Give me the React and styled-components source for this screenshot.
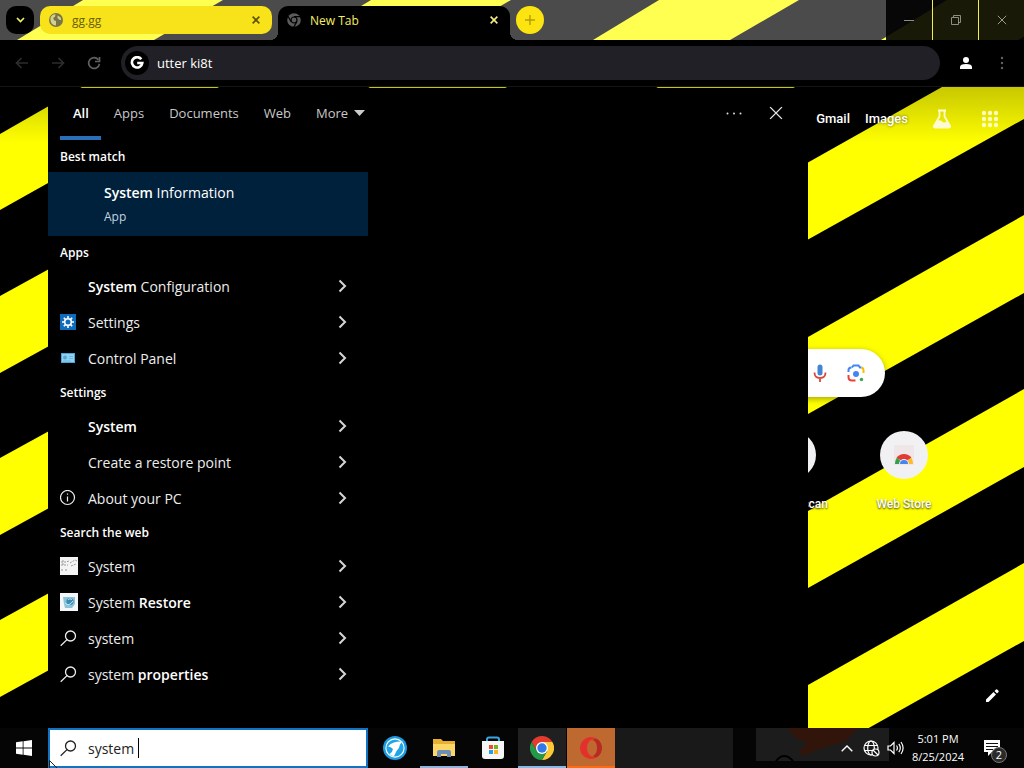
import React from 'react';
import styled, { createGlobalStyle, css } from 'styled-components';

const Global = createGlobalStyle`
  *, *::before, *::after { box-sizing: border-box; }
  body { margin: 0; background: #000; font-family: "Open Sans", "Noto Sans", sans-serif; color: #fff; }
  button, input { font: inherit; color: inherit; border: 0; background: none; padding: 0; margin: 0; }
  a { color: inherit; text-decoration: none; }
  h2, ul { margin: 0; padding: 0; list-style: none; }
  svg { display: block; flex: none; }
`;

const Desktop = styled.div`
  min-height: 100vh;
  display: grid;
  grid-template-rows: 40px 47px 1fr 40px;
  overflow: hidden;
`;

/* ---------- browser frame ---------- */

const TabStrip = styled.header`
  position: relative;
  display: flex;
  background: #4b4b4b;
`;

const FrameArt = styled.svg`
  position: absolute;
  inset: 0;
  width: 100%;
  height: 100%;
`;

const TabRow = styled.div`
  position: relative;
  flex: 1;
  display: flex;
  align-items: flex-start;
  gap: 6px;
  padding: 6px 0 0 6px;
`;

const TabMenu = styled.button`
  display: grid;
  place-items: center;
  width: 28px;
  height: 28px;
  border-radius: 10px;
  background: #000;
`;

const Tab = styled.div`
  position: relative;
  display: flex;
  align-items: center;
  gap: 9px;
  width: 232px;
  height: 28px;
  padding: 0 12px 0 9px;
  border-radius: 10px;
  background: #f8e21a;
  color: #6b5f08;
  font-size: 12px;
  ${(p) => p.$active && css`
    height: 34px;
    padding-bottom: 6px;
    border-radius: 10px 10px 0 0;
    background: #000;
    color: #f6ee62;
    &::before, &::after {
      content: "";
      position: absolute;
      bottom: 0;
      width: 8px;
      height: 8px;
    }
    &::before { left: -8px; background: radial-gradient(circle at 0 0, transparent 8px, #000 8px); }
    &::after { right: -8px; background: radial-gradient(circle at 100% 0, transparent 8px, #000 8px); }
  `}
`;

const TabTitle = styled.span`
  flex: 1;
`;

const NewTab = styled.button`
  display: grid;
  place-items: center;
  width: 28px;
  height: 28px;
  border-radius: 50%;
  background: #fbe40f;
`;

const Captions = styled.div`
  position: relative;
  display: flex;
  background: rgba(0, 0, 0, 0.9);
`;

const CaptionButton = styled.button`
  display: grid;
  place-items: center;
  width: 46px;
  & + & { border-left: 1px solid #f4ee4a; }
`;

const Toolbar = styled.div`
  display: flex;
  align-items: center;
  padding: 0 4px;
  background: #000;
  border-bottom: 1px solid #141414;
`;

const ToolButton = styled.button`
  display: grid;
  place-items: center;
  width: 36px;
  height: 32px;
`;

const Omnibox = styled.label`
  flex: 1;
  display: flex;
  align-items: center;
  gap: 8px;
  height: 34px;
  margin: 0 8px 0 9px;
  padding: 0 4px;
  border-radius: 17px;
  background: #202026;
`;

const GoogleBadge = styled.span`
  display: grid;
  place-items: center;
  width: 24px;
  height: 24px;
  border-radius: 50%;
  background: #000;
`;

const Address = styled.input`
  flex: 1;
  min-width: 0;
  font-size: 13px;
  outline: 0;
`;

const Menu = styled.div`
  display: flex;
`;

/* ---------- new tab page ---------- */

const NewTabPage = styled.main`
  position: relative;
  display: flex;
  flex-direction: column;
  min-height: 641px;
  background: #000;
`;

const Wallpaper = styled.svg`
  position: absolute;
  inset: 0;
  width: 100%;
  height: 100%;
`;

const Shade = styled.div`
  position: absolute;
  inset: 0 0 auto 0;
  height: 56px;
  background: linear-gradient(rgba(0, 0, 0, 0.22), transparent);
`;

const PageHeader = styled.nav`
  position: relative;
  display: flex;
  justify-content: flex-end;
  align-items: center;
  height: 63px;
  padding-right: 24px;
  font: 500 13px Roboto, "Liberation Sans", sans-serif;
  text-shadow: 0 0 3px rgba(0, 0, 0, 0.6);
`;

const HeaderLink = styled.a`
  margin-right: ${(p) => p.$space || 15}px;
`;

const SearchPill = styled.div`
  position: relative;
  display: flex;
  justify-content: flex-end;
  align-items: center;
  gap: 16px;
  width: 746px;
  height: 48px;
  margin: 199px auto 0;
  padding-right: 19px;
  border-radius: 24px;
  background: #fff;
  box-shadow: 0 2px 6px rgba(0, 0, 0, 0.35);
`;

const Shortcuts = styled.div`
  position: relative;
  display: flex;
  justify-content: flex-end;
  gap: 40px;
  width: 856px;
  margin: 34px auto 0;
`;

const Shortcut = styled.a`
  display: flex;
  flex-direction: column;
  align-items: ${(p) => (p.$end ? 'flex-end' : 'center')};
  gap: 17px;
  width: 72px;
  white-space: nowrap;
  font: 500 12px/16px Roboto, "Liberation Sans", sans-serif;
  text-shadow: 0 1px 2px rgba(0, 0, 0, 0.8);
`;

const ShortcutDisc = styled.span`
  display: grid;
  place-items: center;
  width: 48px;
  height: 48px;
  margin: 0 12px;
  border-radius: 50%;
  background: #f1f1f4;
`;

const Customize = styled.button`
  position: absolute;
  right: 24px;
  bottom: 24px;
`;

/* ---------- Windows search flyout ---------- */

const Flyout = styled.section`
  position: absolute;
  top: 1px;
  bottom: 0;
  left: 48px;
  width: 760px;
  background: #000;
`;

const FlyoutHeader = styled.div`
  display: flex;
  align-items: stretch;
  height: 52px;
  padding: 0 20px 0 12px;
`;

const Scope = styled.button`
  display: flex;
  align-items: center;
  gap: 6px;
  padding: 2px 12px 0 13px;
  font-size: 13px;
  color: #c9c9c9;
  border-bottom: 4px solid transparent;
  ${(p) => p.$active && css`
    color: #fff;
    font-weight: 600;
    border-color: #2a6fb8;
  `}
`;

const Spacer = styled.span`
  flex: 1;
`;

const FlyoutAction = styled.button`
  display: grid;
  place-items: center;
  width: 24px;
  height: 50px;
  margin-left: 18px;
`;

const Results = styled.div`
  width: 320px;
`;

const GroupTitle = styled.h2`
  height: 32px;
  padding: 2px 0 0 12px;
  font-size: 12px;
  font-weight: 600;
  line-height: 30px;
`;

const BestMatch = styled.button`
  display: flex;
  flex-direction: column;
  justify-content: center;
  gap: 4px;
  width: 100%;
  height: 64px;
  padding: 2px 0 0 56px;
  text-align: left;
  background: #00213c;
  font-size: 14px;
  line-height: 20px;
`;

const Kind = styled.span`
  font-size: 12px;
  color: #c3d3e0;
`;

const Row = styled.button`
  display: flex;
  align-items: center;
  gap: 12px;
  width: 100%;
  height: 36px;
  padding: 0 21px 0 12px;
  text-align: left;
  font-size: 14px;
  color: #ededed;
`;

const IconSlot = styled.span`
  width: 16px;
  height: 18px;
  display: flex;
  align-items: center;
`;

const RowText = styled.span`
  flex: 1;
`;

const Strong = styled.strong`
  font-weight: 600;
  color: #fff;
`;

/* ---------- taskbar ---------- */

const Taskbar = styled.footer`
  position: relative;
  display: flex;
  background: #050505;
`;

const Start = styled.button`
  display: grid;
  place-items: center;
  width: 48px;
`;

const SearchBox = styled.label`
  display: flex;
  align-items: center;
  gap: 11px;
  width: 320px;
  padding: 0 10px;
  border: 2px solid #1173c4;
  background: #fff;
  color: #222;
`;

const SearchField = styled.input`
  width: 50px;
  font-size: 14px;
  outline: 0;
`;

const Typed = styled.span`
  display: flex;
  align-items: center;
  &::after { content: ""; width: 1px; height: 20px; background: #000; }
`;

const Apps = styled.div`
  display: flex;
  gap: 1px;
  padding-left: 3px;
`;

const AppButton = styled.button`
  display: grid;
  place-items: center;
  width: 48px;
  background: ${(p) => p.$bg || 'transparent'};
  box-shadow: ${(p) => (p.$line ? `inset 0 -2px ${p.$line}` : 'none')};
`;

const Preview = styled.div`
  width: 118px;
  background: #191919;
`;

const TrayArt = styled.svg`
  position: absolute;
  right: 135px;
  top: 0;
`;

const Tray = styled.div`
  position: relative;
  display: flex;
  align-items: center;
  gap: 6px;
  margin-left: auto;
  padding-right: 14px;
`;

const TrayButton = styled.button`
  display: grid;
  place-items: center;
  width: 18px;
  height: 40px;
`;

const Clock = styled.time`
  width: 60px;
  margin-left: -2px;
  text-align: center;
  font-size: 11px;
  line-height: 18px;
`;

const Notices = styled.button`
  position: relative;
  display: grid;
  place-items: center;
  width: 36px;
  height: 40px;
`;

const Count = styled.span`
  position: absolute;
  right: 3px;
  bottom: 5px;
  width: 16px;
  height: 16px;
  border: 1px solid #777;
  border-radius: 50%;
  background: #2a2a2a;
  font-size: 11px;
  line-height: 14px;
`;

const Pointer = styled.svg`
  position: absolute;
  left: 49px;
  bottom: 0;
`;

/* ---------- drawings ---------- */

const Cross = ({ size = 8, color = '#fff', width = 2 }) => (
  <svg width={size} height={size} viewBox="0 0 10 10" stroke={color} strokeWidth={width} fill="none">
    <path d="M.8.8l8.4 8.4M9.2.8L.8 9.2" />
  </svg>
);

const Chevron = () => (
  <svg width="9" height="14" viewBox="0 0 9 14" fill="none" stroke="#d6d6d6" strokeWidth="2">
    <path d="M1.5 1.5L7 7l-5.500 5.500" />
  </svg>
);

const Loupe = ({ color = '#eee' }) => (
  <svg width="17" height="17" viewBox="0 0 17 17" fill="none" stroke={color} strokeWidth="1.3">
    <circle cx="10.500" cy="6" r="5" />
    <path d="M7 9.600L.7 15.700" />
  </svg>
);

const GlobeMark = () => (
  <svg width="14" height="14" viewBox="0 0 14 14">
    <circle cx="7" cy="7" r="7" fill="#77734a" />
    <path d="M1.5 5C2 2.7 4 1.4 6.5 1.2L6 3.8 4.2 5 5 7.3 7 8v4.5C3.5 12.5 1 9.5 1.5 5zM8.5 2.5l3 1.8.8 3-2-.6-1.8-1.8z" fill="#d6d08a" />
  </svg>
);

const ChromeMono = () => (
  <svg width="14" height="14" viewBox="0 0 14 14" fill="none">
    <circle cx="7" cy="7" r="6.8" fill="#5c5c5c" />
    <circle cx="7" cy="7" r="3" fill="#5c5c5c" stroke="#000" strokeWidth="1.2" />
    <path d="M7 3.7h6.2M4.1 8.6L1 3.3M9.9 8.6L6.8 14" stroke="#000" strokeWidth="1.2" />
  </svg>
);

const ChromeLogo = () => (
  <svg width="24" height="24" viewBox="0 0 24 24">
    <path d="M1.6 6A12 12 0 0 1 22.4 6L12 6.5l-5.2 8.5z" fill="#e33b2e" />
    <path d="M22.4 6A12 12 0 0 1 12 24l5.2-9L12 6z" fill="#fcc934" />
    <path d="M12 24A12 12 0 0 1 1.6 6l5.2 9h10.4z" fill="#249a49" />
    <circle cx="12" cy="12" r="6" fill="#fff" />
    <circle cx="12" cy="12" r="4.7" fill="#3378e8" />
  </svg>
);

const SettingsTile = () => (
  <svg width="16" height="16" viewBox="0 0 16 16">
    <path fill="#0f6cbd" d="M0 0h16v16H0z" />
    <g stroke="#fff" fill="none">
      <circle cx="8" cy="8" r="3.3" strokeWidth="1.6" />
      <path strokeWidth="1.6" d="M8 2v2.4M8 11.6V14M2 8h2.4M11.6 8H14M3.8 3.8l1.6 1.6M10.6 10.6l1.6 1.6M3.8 12.2l1.6-1.6M10.6 5.4l1.6-1.6" />
    </g>
  </svg>
);

const PanelTile = () => (
  <svg width="16" height="16" viewBox="0 0 16 16">
    <path fill="#48a8dd" d="M1 3h14v10H1z" />
    <path fill="#8fd3f4" d="M2 4h12v8H2z" />
    <circle cx="5" cy="7.5" r="2" fill="#5fa6cc" />
    <path stroke="#6cb8de" d="M9 6.500h4M9 8.500h4M3 11h8" />
  </svg>
);

const InfoMark = () => (
  <svg width="16" height="16" viewBox="0 0 16 16" fill="none" stroke="#eee" strokeWidth="1.2">
    <circle cx="7.500" cy="7.500" r="7" />
    <path d="M7.500 6.500v5M7.500 3.500v1.300" />
  </svg>
);

const SketchThumb = () => (
  <svg width="18" height="18" viewBox="0 0 18 18">
    <path fill="#f4f4f4" d="M0 0h18v18H0z" />
    <path fill="none" stroke="#999" strokeDasharray="2 1" d="M1 5h5l3-1M10 6l5-3 2 1M1 8h7M11 9l5-2M1 13h2M5 13h3M3 3v5" />
  </svg>
);

const RestoreThumb = () => (
  <svg width="18" height="18" viewBox="0 0 18 18">
    <path fill="#f3f7fa" d="M0 0h18v18H0z" />
    <path fill="#8cc3d8" d="M3 4h12v7l-3 4H5l-1-4z" />
    <circle cx="10" cy="8.500" r="3.600" fill="#3a8cb4" />
    <path fill="none" stroke="#c4e6f0" d="M5 10q4 4 8-2M8 6.500q2-1.500 4 0" />
  </svg>
);

const frameStripes = [17, 305, 593, 881];
const leftStripes = [209, 371, 533];
const rightStripes = [250, 424, 598];

const results = [
  {
    title: 'Apps',
    items: [
      { text: [['System', 1], [' Configuration']] },
      { icon: <SettingsTile />, text: [['Settings']] },
      { icon: <PanelTile />, text: [['Control Panel']] },
    ],
  },
  {
    title: 'Settings',
    items: [
      { text: [['System', 1]] },
      { text: [['Create a restore point']] },
      { icon: <InfoMark />, text: [['About your PC']] },
    ],
  },
  {
    title: 'Search the web',
    items: [
      { icon: <SketchThumb />, text: [['System']] },
      { icon: <RestoreThumb />, text: [['System '], ['Restore', 1]] },
      { icon: <Loupe />, text: [['system']] },
      { icon: <Loupe />, text: [['system '], ['properties', 1]] },
    ],
  },
];

function BrowserFrame() {
  return (
    <>
      <TabStrip>
        <FrameArt viewBox="0 0 1024 40" preserveAspectRatio="xMinYMin slice" aria-hidden="true">
          {frameStripes.map((x) => (
            <polygon key={x} fill="#ffff52" points={`${x},40 ${x + 66},0 ${x + 206},0 ${x + 137},40`} />
          ))}
        </FrameArt>
        <TabRow>
          <TabMenu aria-label="Search tabs">
            <svg width="9" height="6" viewBox="0 0 9 6" fill="none" stroke="#f0f060" strokeWidth="1.7"><path d="M1 1l3.5 3.5L8 1" /></svg>
          </TabMenu>
          <Tab>
            <GlobeMark />
            <TabTitle>gg.gg</TabTitle>
            <button aria-label="Close gg.gg"><Cross color="#5c5200" /></button>
          </Tab>
          <Tab $active>
            <ChromeMono />
            <TabTitle>New Tab</TabTitle>
            <button aria-label="Close New Tab"><Cross color="#f6ee80" /></button>
          </Tab>
          <NewTab aria-label="New tab">
            <svg width="10" height="10" viewBox="0 0 10 10" stroke="#b59e00" strokeWidth="1.4"><path d="M5 0v10M0 5h10" /></svg>
          </NewTab>
        </TabRow>
        <Captions>
          <CaptionButton aria-label="Minimize">
            <svg width="10" height="10" viewBox="0 0 10 10" stroke="#8e8e80"><path d="M0 5.5h10" /></svg>
          </CaptionButton>
          <CaptionButton aria-label="Restore">
            <svg width="10" height="10" viewBox="0 0 10 10" fill="none" stroke="#8e8e80"><path d="M.5 2.5h7v7h-7zM2.500 2.500v-2h7v7h-2" /></svg>
          </CaptionButton>
          <CaptionButton aria-label="Close window"><Cross size={10} color="#9c9c90" width={1} /></CaptionButton>
        </Captions>
      </TabStrip>
      <Toolbar>
        <ToolButton aria-label="Back">
          <svg width="14" height="12" viewBox="0 0 14 12" fill="none" stroke="#2d2d2d" strokeWidth="1.7"><path d="M13 6H2M6.500 1L1.500 6l5 5" /></svg>
        </ToolButton>
        <ToolButton aria-label="Forward">
          <svg width="14" height="12" viewBox="0 0 14 12" fill="none" stroke="#2d2d2d" strokeWidth="1.7"><path d="M1 6h11M7.500 1l5 5-5 5" /></svg>
        </ToolButton>
        <ToolButton aria-label="Reload">
          <svg width="14" height="14" viewBox="0 0 14 14" fill="none" stroke="#606060" strokeWidth="1.7"><path d="M11.300 3.700A5.400 5.400 0 1 0 12.400 7.800M12.500 1v4.500H8" /></svg>
        </ToolButton>
        <Omnibox>
          <GoogleBadge>
            <svg width="14" height="14" viewBox="0 0 14 14" fill="none" stroke="#fff" strokeWidth="2.600"><path d="M11.300 3.200A5.200 5.200 0 1 0 12.300 7H7.200" /></svg>
          </GoogleBadge>
          <Address aria-label="Address and search bar" defaultValue="utter ki8t" />
        </Omnibox>
        <Menu>
          <ToolButton aria-label="Profile">
            <svg width="12" height="12" viewBox="0 0 12 12" fill="#fff"><circle cx="6" cy="3" r="3" /><path d="M0 12V10q0-3 6-3t6 3v2z" /></svg>
          </ToolButton>
          <ToolButton aria-label="Browser menu">
            <svg width="4" height="14" viewBox="0 0 4 14" fill="#626262"><circle cx="2" cy="2" r="1.200" /><circle cx="2" cy="7" r="1.200" /><circle cx="2" cy="12" r="1.200" /></svg>
          </ToolButton>
        </Menu>
      </Toolbar>
    </>
  );
}

function SearchFlyout() {
  return (
    <Flyout aria-label="Search results">
      <FlyoutHeader>
        <Scope $active>All</Scope>
        <Scope>Apps</Scope>
        <Scope>Documents</Scope>
        <Scope>Web</Scope>
        <Scope>
          More
          <svg width="11" height="6" viewBox="0 0 11 6" fill="#ccc"><path d="M0 0h11L5.500 6z" /></svg>
        </Scope>
        <Spacer />
        <FlyoutAction aria-label="Options">
          <svg width="16" height="3" viewBox="0 0 16 3" fill="#ddd"><circle cx="1.500" cy="1.500" r="1" /><circle cx="8" cy="1.500" r="1" /><circle cx="14.500" cy="1.500" r="1" /></svg>
        </FlyoutAction>
        <FlyoutAction aria-label="Close search"><Cross size={14} color="#e6e6e6" width={1} /></FlyoutAction>
      </FlyoutHeader>
      <Results>
        <GroupTitle>Best match</GroupTitle>
        <BestMatch>
          <span><Strong>System</Strong> Information</span>
          <Kind>App</Kind>
        </BestMatch>
        {results.map((group) => (
          <section key={group.title}>
            <GroupTitle>{group.title}</GroupTitle>
            <ul>
              {group.items.map((item, i) => (
                <li key={i}>
                  <Row>
                    <IconSlot>{item.icon}</IconSlot>
                    <RowText>
                      {item.text.map(([t, bold]) => (bold ? <Strong key={t}>{t}</Strong> : t))}
                    </RowText>
                    <Chevron />
                  </Row>
                </li>
              ))}
            </ul>
          </section>
        ))}
      </Results>
    </Flyout>
  );
}

function StartPage() {
  return (
    <NewTabPage>
      <Wallpaper viewBox="0 0 1024 641" preserveAspectRatio="xMinYMin slice" aria-hidden="true">
        <g fill="#ff0">
          <polygon points="0,47 82,0 219,0 0,123" />
          <polygon points="370,0 507,0 500,4 363,4" />
          <polygon points="658,0 795,0 788,4 651,4" />
          <polygon points="800,80 942,0 1024,0 1024,32 800,157" />
          {leftStripes.map((y) => (
            <polygon key={y} points={`0,${y} 60,${y - 33} 60,${y + 44} 0,${y + 77}`} />
          ))}
          {rightStripes.map((y) => (
            <polygon key={y} points={`808,${y} 1024,${y - 122} 1024,${y - 44} 808,${y + 77}`} />
          ))}
        </g>
      </Wallpaper>
      <Shade />
      <PageHeader>
        <HeaderLink href="#gmail">Gmail</HeaderLink>
        <HeaderLink href="#images" $space={24}>Images</HeaderLink>
        <HeaderLink href="#labs" $space={28} aria-label="Search Labs">
          <svg width="20" height="20" viewBox="0 0 20 20"><path fill="none" stroke="#fffbd0" strokeWidth="1.800" d="M6 1.500h8M7.500 1.500v6L2 17q-.6 1.500 1 1.500h14q1.600 0 1-1.500L12.500 7.500v-6" /><path fill="#fffbd0" d="M5 12q3-1.500 5 .5t5 0l3 6H2z" /></svg>
        </HeaderLink>
        <a href="#apps" aria-label="Google apps">
          <svg width="20" height="18" viewBox="0 0 20 18" fill="#fffbc0">
            {[3, 9, 15].map((y) => [4, 10, 16].map((x) => <circle key={`${x}-${y}`} cx={x} cy={y} r="2.200" />))}
          </svg>
        </a>
      </PageHeader>
      <SearchPill>
        <button aria-label="Search by voice">
          <svg width="20" height="20" viewBox="0 0 20 20" fill="none">
            <rect x="7.500" y="1.500" width="5" height="11" rx="2.500" fill="#4285d4" />
            <path stroke="#d8483e" strokeWidth="1.800" d="M4.500 9.500q0 5.500 5.500 5.500t5.500-5.500M10 15v4" />
          </svg>
        </button>
        <button aria-label="Search by image">
          <svg width="20" height="20" viewBox="0 0 20 20" fill="none" strokeWidth="2">
            <path stroke="#4285f4" d="M6 4.500l1.500-2h5l1.500 2h1.500" />
            <path stroke="#fbbc04" d="M15.500 4.500q2 .5 2 3V10" />
            <path stroke="#4285f4" d="M2.500 9V7q0-2.500 3-2.500" />
            <path stroke="#ea4335" d="M2.500 12v2q0 3.500 3.500 3.500h3.500" />
            <circle cx="10" cy="11" r="3" fill="#4285f4" />
            <circle cx="15.500" cy="16.500" r="1.700" fill="#34a853" />
          </svg>
        </button>
      </SearchPill>
      <Shortcuts>
        <Shortcut href="#scan" $end>
          <ShortcutDisc />
          <span>scan</span>
        </Shortcut>
        <Shortcut href="#store">
          <ShortcutDisc>
            <svg width="20" height="20" viewBox="0 0 20 20" aria-hidden="true">
              <path fill="#efe6e8" d="M0 0h20v20H0z" />
              <path fill="#e03c31" d="M2.500 13A9 9 0 0 1 17.500 13L10 17z" />
              <path fill="#34a04e" d="M1 19q0-3.500 1.800-6.300L8 17v2z" />
              <path fill="#fbbc2a" d="M19 19q0-3.500-1.800-6.300L12 17v2z" />
              <path fill="#f1e8ea" d="M5 19a5 5 0 0 1 10 0z" />
              <path fill="#4285f4" d="M6 19a4 4 0 0 1 8 0z" />
            </svg>
          </ShortcutDisc>
          <span>Web Store</span>
        </Shortcut>
      </Shortcuts>
      <Customize aria-label="Customize this page">
        <svg width="16" height="16" viewBox="0 0 16 16" fill="#fff"><path d="M2 11.500l7.500-7.500 2.500 2.500L4.500 14H2zM10.500 3l1.500-1.500q.6-.5 1.200 0l1.300 1.300q.5.600 0 1.200L13 5.500z" /></svg>
      </Customize>
      <SearchFlyout />
    </NewTabPage>
  );
}

function SystemTaskbar() {
  return (
    <Taskbar>
      <Start aria-label="Start">
        <svg width="16" height="16" viewBox="0 0 16 16" fill="#fff"><path d="M0 2.300l6.700-1v6.300H0zM7.500 1.200L16 0v7.600H7.500zM0 8.400h6.700v6.300L0 13.700zM7.500 8.400H16V16l-8.500-1.200z" /></svg>
      </Start>
      <SearchBox>
        <Loupe color="#222" />
        <Typed><SearchField aria-label="Type here to search" defaultValue="system " /></Typed>
      </SearchBox>
      <Apps>
        <AppButton aria-label="LibreWolf">
          <svg width="24" height="24" viewBox="0 0 24 24"><circle cx="12" cy="12" r="12" fill="#1c9be0" /><circle cx="12" cy="12" r="9.700" fill="#fff" /><circle cx="12" cy="12" r="8.600" fill="#22a5e6" /><path fill="#fff" d="M5 10.500Q9 5.500 18 5.500q1 1-1 3-.5 4-3.500 6.500L11 20.300q-3-.3-4.500-2.300 3-1.500 3.500-5-2-2.500-5-2.500z" /></svg>
        </AppButton>
        <AppButton aria-label="File Explorer" $line="#8fb4e0">
          <svg width="22" height="18" viewBox="0 0 22 18"><path fill="#e8b030" d="M0 0h8l2 2h12v14H0z" /><path fill="#fcd766" d="M0 5h22v12H0z" /><path fill="#6b8fb8" d="M4 18v-5q0-2 2-2h10q2 0 2 2v5h-4v-3H8v3z" /></svg>
        </AppButton>
        <AppButton aria-label="Microsoft Store">
          <svg width="24" height="24" viewBox="0 0 24 24"><path fill="none" stroke="#38a6e0" strokeWidth="2" d="M6 6V3.500q0-2 2-2h8q2 0 2 2V6" /><path fill="#f6f6f6" d="M1 5h22v15q0 3-3 3H4q-3 0-3-3z" /><path fill="#e5512c" d="M8 9h4v4H8z" /><path fill="#77b320" d="M13 9h4v4h-4z" /><path fill="#21a0e8" d="M8 14h4v4H8z" /><path fill="#f9b51b" d="M13 14h4v4h-4z" /></svg>
        </AppButton>
        <AppButton aria-label="Google Chrome" $bg="#202020" $line="#86b8e8"><ChromeLogo /></AppButton>
        <AppButton aria-label="Opera" $bg="#be6930" $line="#ff6a10">
          <svg width="24" height="24" viewBox="0 0 24 24"><path fill="#e4302c" d="M12 1a11 11 0 1 0 7 19.500q-3 1.500-6 0-5-2-5-8.500t5-8.500q3-1.500 6 0A11 11 0 0 0 12 1z" /><path fill="#b92a24" d="M19 3.500a11 11 0 0 1 0 17q-3 1.500-5.500-.5 4.500-1.500 4.500-8T13.500 4Q16 2 19 3.500z" /></svg>
        </AppButton>
      </Apps>
      <Preview />
      <TrayArt width="133" height="33" viewBox="0 0 133 33" aria-hidden="true">
        <path fill="#1c1c1c" d="M0 0h133v33H0z" />
        <path fill="#32150a" d="M32 0h70l-12 13-30 9-13 6-4-5 8-8-13-6z" />
        <path fill="none" stroke="#000" strokeWidth="2" d="M20 33q8-10 17 0" />
      </TrayArt>
      <Tray>
        <TrayButton aria-label="Show hidden icons">
          <svg width="12" height="7" viewBox="0 0 12 7" fill="none" stroke="#fff" strokeWidth="1.400"><path d="M.7 6.300L6 1l5.300 5.300" /></svg>
        </TrayButton>
        <TrayButton aria-label="Network">
          <svg width="17" height="17" viewBox="0 0 17 17" fill="none" stroke="#fff" strokeWidth="1.200"><circle cx="8" cy="8" r="7" /><ellipse cx="8" cy="8" rx="3.300" ry="7" /><path d="M1.500 5.500h13M1.500 10.500h13" /><circle cx="12.500" cy="12.500" r="3.500" fill="#111" /><path d="M10 10l5 5" /></svg>
        </TrayButton>
        <TrayButton aria-label="Volume">
          <svg width="17" height="14" viewBox="0 0 17 14" fill="none" stroke="#fff" strokeWidth="1.200"><path d="M1 5h2.500L7 1.500v11L3.500 9H1zM9.500 4.500q1.800 2.500 0 5M11.800 2.800q3 4.200 0 8.400M14 1q4.200 6 0 12" /></svg>
        </TrayButton>
        <Clock>5:01 PM<br />8/25/2024</Clock>
        <Notices aria-label="2 notifications">
          <svg width="18" height="16" viewBox="0 0 18 16"><path fill="#fff" d="M1 0h16v12H9l-4 4v-4H1z" /><path stroke="#111" d="M3 3.500h12M3 6.500h12M3 9.500h7" /></svg>
          <Count>2</Count>
        </Notices>
      </Tray>
      <Pointer width="8" height="8" viewBox="0 0 8 8" aria-hidden="true"><path d="M.5.500V9M.5.500L8 8" stroke="#222" fill="#fff" /></Pointer>
    </Taskbar>
  );
}

export default function App() {
  return (
    <Desktop>
      <Global />
      <BrowserFrame />
      <StartPage />
      <SystemTaskbar />
    </Desktop>
  );
}
